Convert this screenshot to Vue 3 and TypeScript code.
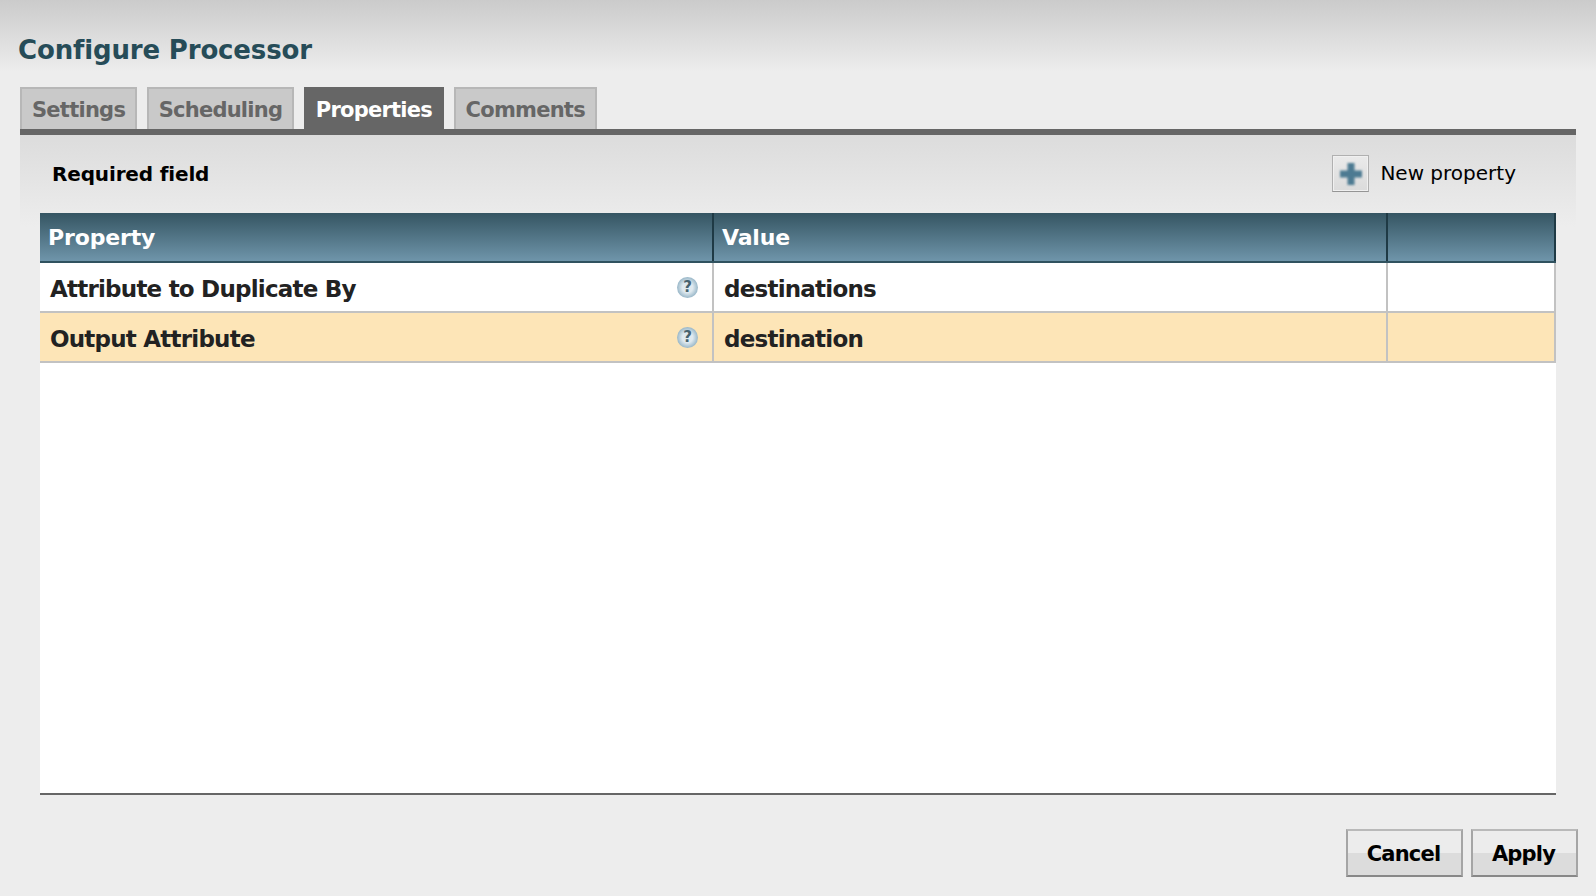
<script setup lang="ts">
interface Row { name: string; value: string; active: boolean }
const tabs: string[] = ['Settings', 'Scheduling', 'Properties', 'Comments']
const activeTab = 'Properties'
const rows: Row[] = [
  { name: 'Attribute to Duplicate By', value: 'destinations', active: false },
  { name: 'Output Attribute', value: 'destination', active: true },
]
</script>

<template>
  <div class="dialog">
    <header class="head"><h1 class="title">Configure Processor</h1></header>
    <nav class="tabs">
      <div v-for="t in tabs" :key="t" class="tab" :class="{ on: t === activeTab }">{{ t }}</div>
    </nav>
    <section class="panel">
      <div class="tools">
        <span class="req">Required field</span>
        <div class="new">
          <span class="plus">
            <svg width="28" height="28" viewBox="0 0 28 28">
              <defs><filter id="soft" x="-20%" y="-20%" width="140%" height="140%"><feGaussianBlur stdDeviation="0.9" /></filter></defs>
              <path d="M10.5 3h7v7.5h7.5v7h-7.5v7.5h-7v-7.5h-7.5v-7h7.5z" fill="#4d7a92" filter="url(#soft)" />
            </svg>
          </span>
          <span class="newlabel">New property</span>
        </div>
      </div>
      <div class="table">
        <div class="thead">
          <div class="th c1">Property</div>
          <div class="th c2">Value</div>
          <div class="th c3"></div>
        </div>
        <div v-for="r in rows" :key="r.name" class="row" :class="{ active: r.active }">
          <div class="td c1">
            <span>{{ r.name }}</span>
            <span class="help">?</span>
          </div>
          <div class="td c2">{{ r.value }}</div>
          <div class="td c3"></div>
        </div>
      </div>
    </section>
    <footer class="foot">
      <button class="btn cancel">Cancel</button>
      <button class="btn apply">Apply</button>
    </footer>
  </div>
</template>

<style>
html, body { margin: 0; background: #ededed; }
</style>

<style scoped>
.dialog {
  width: 1596px; height: 896px; box-sizing: border-box; overflow: hidden;
  background: #ededed; display: flex; flex-direction: column;
  font-family: "DejaVu Sans", Verdana, sans-serif;
}
.head {
  height: 87px; box-sizing: border-box; padding: 34px 0 0 18px; flex: none;
  background: linear-gradient(#cbcbcb 0, #ededed 72px);
}
.title { margin: 0; font-size: 26px; line-height: 32px; font-weight: 700; color: #264c58; letter-spacing: -0.15px; }
.tabs { display: flex; gap: 9.5px; margin-left: 20px; height: 42px; flex: none; }
.tab {
  box-sizing: border-box; height: 42px; padding: 0 10px; border: 2px solid #b7b7b7; border-bottom: 0;
  background: #c9c9c9; color: #666; font-size: 21px; font-weight: 700; line-height: 42px; letter-spacing: -0.75px;
}
.tab.on { background: #666; border-color: #666; color: #fff; }
.panel {
  margin-left: 20px; width: 1556px; border-top: 6px solid #666; flex: none; box-sizing: border-box;
  height: 667px; padding: 0 20px;
  background: linear-gradient(#dcdcdc 0, #ededed 92px);
}
.tools { height: 78px; display: flex; align-items: center; justify-content: space-between; padding: 0 40px 0 12px; }
.req { font-size: 20px; font-weight: 700; color: #000; letter-spacing: -0.15px; margin-top: -1px; }
.new { display: flex; align-items: center; gap: 11px; margin-top: -1px; }
.plus {
  width: 37px; height: 37px; box-sizing: border-box; display: flex; align-items: center; justify-content: center;
  border: 1px solid #b0b0b0; border-bottom-color: #959595; background: linear-gradient(#eaeaea, #dbdbdb); box-shadow: inset 0 0 0 1px #f0f0f0;
}
.newlabel { font-size: 20px; color: #000; letter-spacing: 0; margin-top: -1px; }
.table { background: #fff; height: 580px; border-bottom: 2px solid #666; }
.thead { display: flex; height: 50px; background: linear-gradient(#355562, #6f95aa); border-bottom: 2px solid #30525f; box-sizing: border-box; }
.th { color: #fff; font-size: 22px; font-weight: 700; line-height: 49px; padding-left: 8px; box-sizing: border-box; letter-spacing: -0.15px; border-right: 2px solid #1f3a45; }
.c1 { width: 674px; flex: none; }
.c2 { width: 674px; flex: none; }
.c3 { flex: 1; }
.row { display: flex; height: 50px; background: #fff; }
.row.active { background: #fde5b7; }
.td {
  box-sizing: border-box; height: 50px; border-right: 2px solid #c2c2c2; border-bottom: 2px solid #c2c2c2;
  font-size: 23px; font-weight: 700; color: #222; padding-left: 10px; line-height: 52px; letter-spacing: -0.78px;
  display: flex; align-items: flex-start; justify-content: space-between;
}
.help {
  width: 21px; height: 21px; box-sizing: border-box; border-radius: 50%; margin: 14px 14px 0 0;
  background: radial-gradient(circle, #dfe9ef 35%, #9ab8c9 70%, #7ea3b8); color: #46626f;
  font-size: 15px; font-weight: 700; line-height: 21px; text-align: center; letter-spacing: 0;
}
.foot { display: flex; justify-content: flex-end; gap: 8px; padding: 33px 18px 0 0; flex: none; }
.btn {
  height: 48px; box-sizing: border-box; border: 2px solid #b9b9b9; border-bottom-color: #888; border-right-color: #a5a5a5; border-left-color: #a5a5a5;
  background: linear-gradient(#ececec 0 50%, #dcdcdc 50% 100%); font-family: inherit; font-size: 21px; font-weight: 700; color: #000; padding: 2px 2px 0 0; letter-spacing: -0.8px;
}
.cancel { width: 117px; }
.apply { width: 107px; }
</style>
